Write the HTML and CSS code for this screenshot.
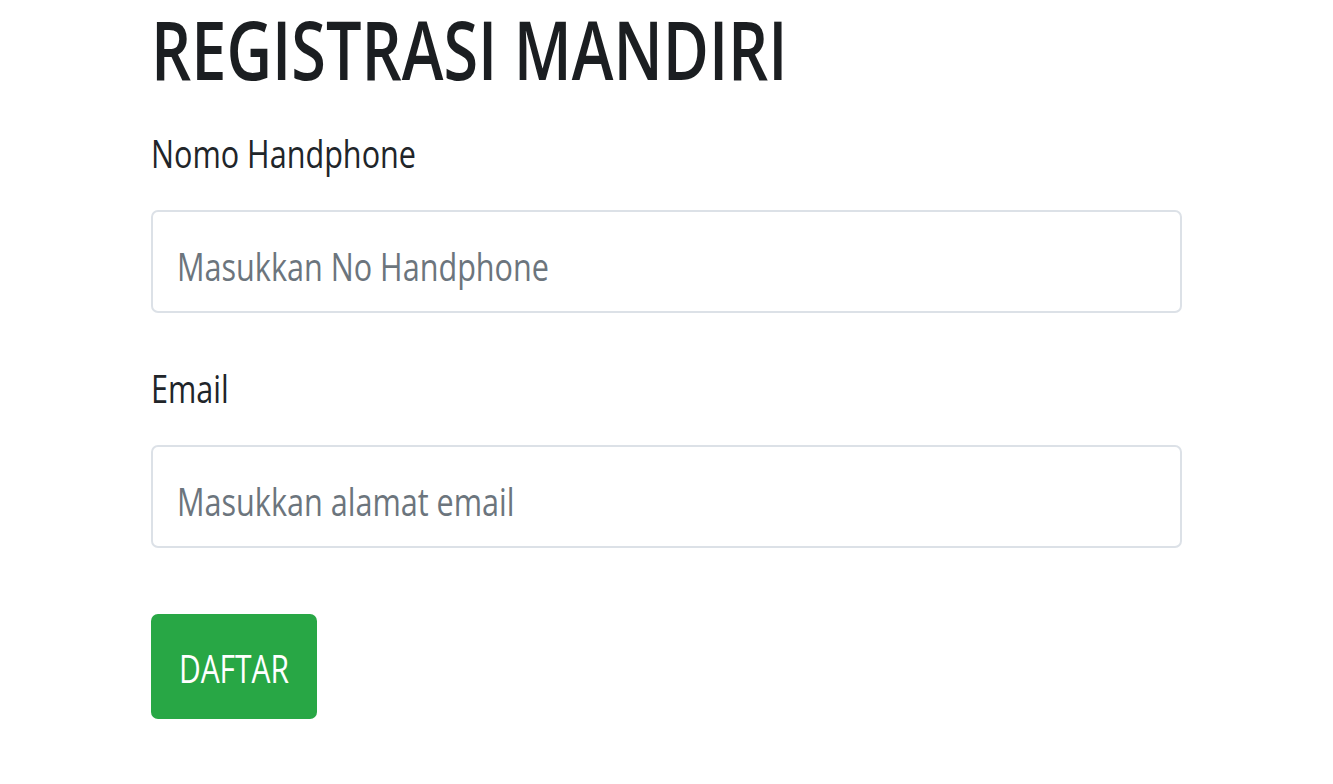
FILE: index.html
```html
<!DOCTYPE html>
<html lang="id">
<head>
<meta charset="utf-8">
<title>Registrasi Mandiri</title>
<link rel="stylesheet" href="styles.css">
</head>
<body>
<main class="page">
  <h1 class="title"><span class="tx">REGISTRASI MANDIRI</span></h1>
  <form class="form">
    <div class="group">
      <label class="label" for="hp"><span class="tx">Nomo Handphone</span></label>
      <div class="field"><span class="tx ph">Masukkan No Handphone</span></div>
    </div>
    <div class="group">
      <label class="label" for="em"><span class="tx">Email</span></label>
      <div class="field"><span class="tx ph">Masukkan alamat email</span></div>
    </div>
    <div class="btn"><span class="tx">DAFTAR</span></div>
  </form>
</main>
</body>
</html>
```
FILE: styles.css
```css
* { box-sizing: border-box; }
body {
  margin: 0;
  background: #ffffff;
  font-family: "Open Sans", "Noto Sans", sans-serif;
  color: #212529;
}
.tx {
  display: inline-block;
  transform: scaleY(1.28);
  transform-origin: center center;
  white-space: nowrap;
}
.page {
  padding-left: 151px;
  width: 1182px;
  padding-top: 0;
}
.title {
  margin: 0;
  font-size: 63px;
  font-weight: 600;
  line-height: 98px;
  letter-spacing: 0;
  color: #1b1e21;
}
.title .tx {
  line-height: 63px;
}
.form {
  display: flex;
  flex-direction: column;
}
.group {
  display: flex;
  flex-direction: column;
}
.label {
  display: block;
  font-size: 30.6px;
  line-height: 40px;
  margin-top: 35px;
  margin-bottom: 37px;
  color: #212529;
}
.group + .group .label { margin-top: 55px; }
.field {
  height: 103px;
  border: 2px solid #dce1e7;
  border-radius: 7px;
  padding: 0 24px;
  display: flex;
  align-items: center;
  font-size: 30.6px;
  line-height: 40px;
}
.ph {
  color: #6c757d;
  margin-top: 8px;
}
.btn {
  margin-top: 66px;
  width: 166px;
  height: 105px;
  background: #28a745;
  border-radius: 7px;
  color: #ffffff;
  font-size: 30px;
  line-height: 40px;
  display: flex;
  align-items: center;
  justify-content: center;
  padding-top: 4px;
}
```
